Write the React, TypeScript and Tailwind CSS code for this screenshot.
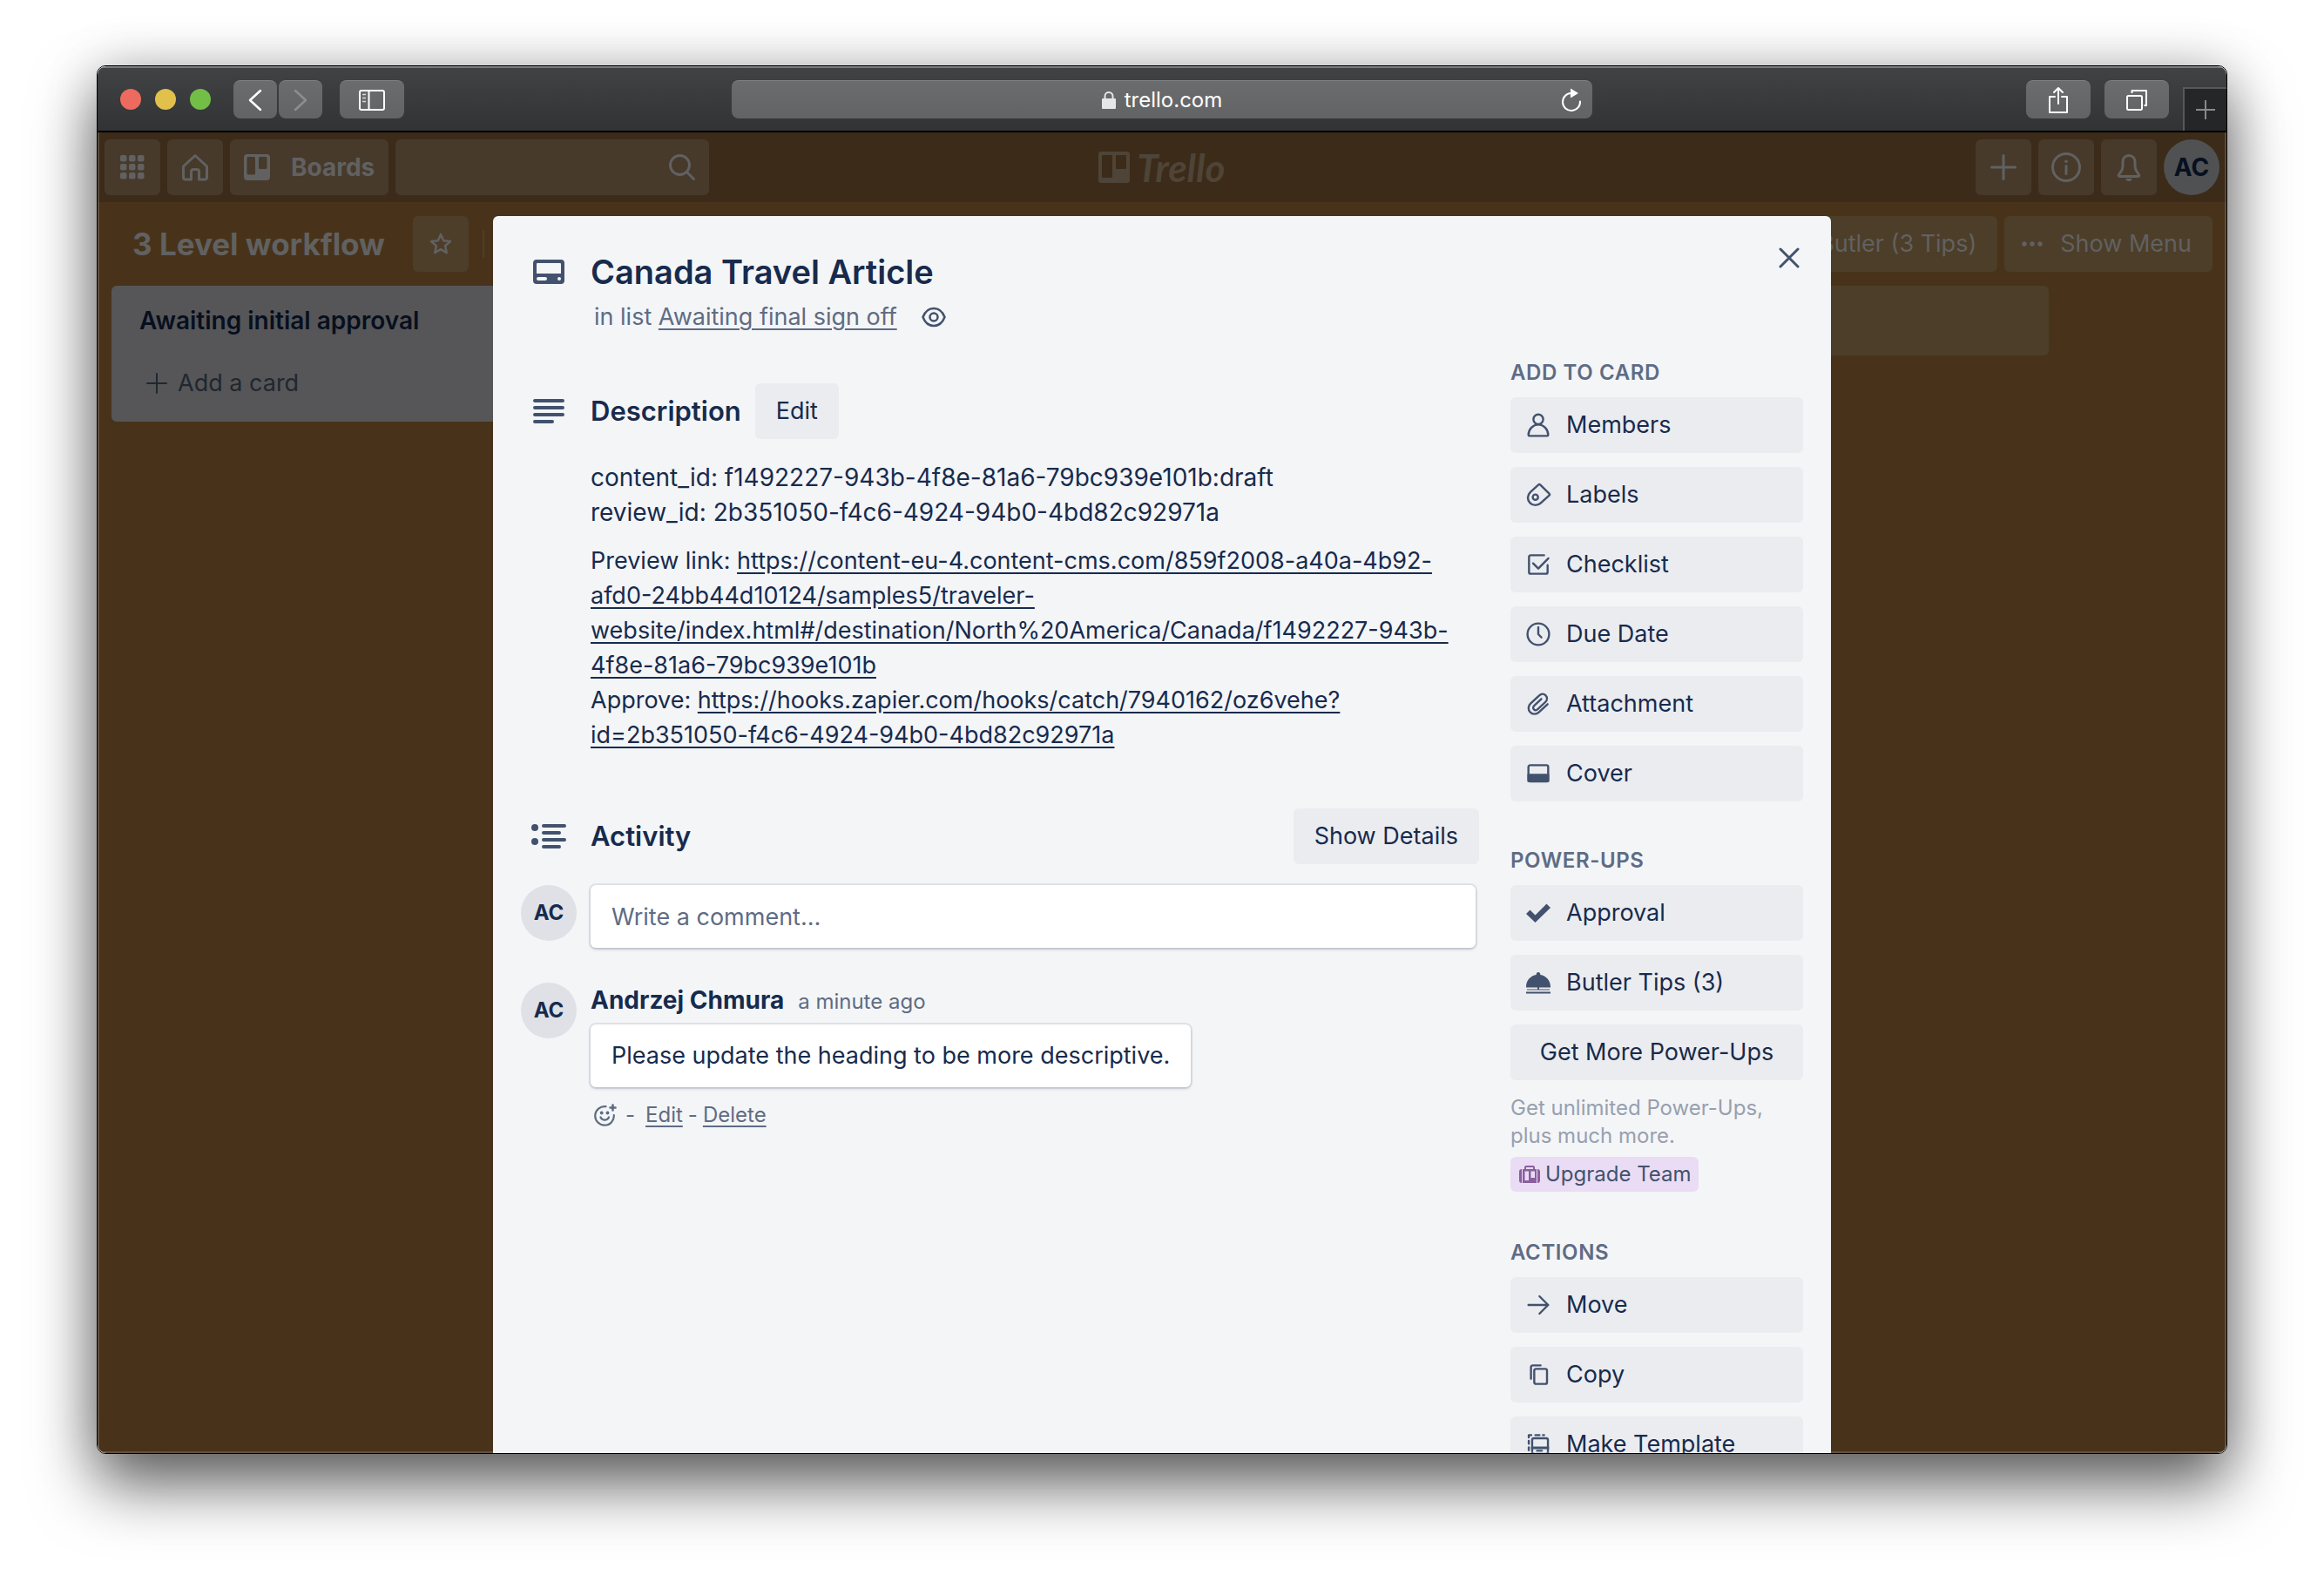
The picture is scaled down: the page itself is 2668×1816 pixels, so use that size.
import React from "react";

type IconProps = { className?: string; children: React.ReactNode; box?: string };

function Icon({ className = "size-8", children, box = "0 0 24 24" }: IconProps) {
  return (
    <svg
      viewBox={box}
      className={"shrink-0 " + className}
      fill="none"
      stroke="currentColor"
      strokeWidth={1.8}
      strokeLinecap="round"
      strokeLinejoin="round"
      aria-hidden="true"
    >
      {children}
    </svg>
  );
}

function TrelloMark({ className }: { className: string }) {
  return (
    <svg viewBox="0 0 36 36" className={"shrink-0 " + className} fill="currentColor" aria-hidden="true">
      <path
        fillRule="evenodd"
        d="M3 0h30a3 3 0 0 1 3 3v30a3 3 0 0 1-3 3H3a3 3 0 0 1-3-3V3a3 3 0 0 1 3-3Zm2 4a1 1 0 0 0-1 1v24a1 1 0 0 0 1 1h10a1 1 0 0 0 1-1V5a1 1 0 0 0-1-1H5Zm16 0a1 1 0 0 0-1 1v14a1 1 0 0 0 1 1h10a1 1 0 0 0 1-1V5a1 1 0 0 0-1-1H21Z"
      />
    </svg>
  );
}

function BoardsMark() {
  return (
    <svg viewBox="0 0 30 30" className="size-[30px] shrink-0" fill="currentColor" aria-hidden="true">
      <path
        fillRule="evenodd"
        d="M4 0h22a4 4 0 0 1 4 4v22a4 4 0 0 1-4 4H4a4 4 0 0 1-4-4V4a4 4 0 0 1 4-4Zm1 3a1.500 1.500 0 0 0-1.500 1.500v17.500a1.500 1.500 0 0 0 1.500 1.500h6.500a1.500 1.500 0 0 0 1.500-1.500V4.500A1.500 1.500 0 0 0 11.500 3H5Zm13.500 0A1.500 1.500 0 0 0 17 4.500v11a1.500 1.500 0 0 0 1.500 1.500H25a1.500 1.500 0 0 0 1.500-1.500v-11A1.500 1.500 0 0 0 25 3h-6.500Z"
      />
    </svg>
  );
}

const chromeButton =
  "flex h-11 items-center justify-center rounded-lg border-t border-[#808183] bg-linear-to-b from-[#6b6c6e] to-[#626365] text-white";

function BrowserBar() {
  return (
    <div className="flex h-[76px] shrink-0 items-center border-t-2 border-b-2 border-t-[#7b7d7e] border-b-black bg-linear-to-b from-[#414244] to-[#323335]">
      <div className="flex flex-1 basis-0 items-center">
        <div className="ml-[26px] flex gap-4">
          <span className="size-6 rounded-full bg-[#ed6a5f]" />
          <span className="size-6 rounded-full bg-[#e1c04c]" />
          <span className="size-6 rounded-full bg-[#72be47]" />
        </div>
        <div className="ml-[26px] flex gap-0.5">
          <button aria-label="Back" className={chromeButton + " w-[50px]"}>
            <svg viewBox="0 0 16 26" className="h-[26px] w-4" fill="none" stroke="currentColor" strokeWidth="2.500" strokeLinecap="round" strokeLinejoin="round"><path d="M14 2 2 13l12 11" /></svg>
          </button>
          <button aria-label="Forward" className={chromeButton + " w-[50px]"}>
            <svg viewBox="0 0 16 26" className="h-[26px] w-4 text-[#8d8e90]" fill="none" stroke="currentColor" strokeWidth="2.500" strokeLinecap="round" strokeLinejoin="round"><path d="m2 2 12 11L2 24" /></svg>
          </button>
        </div>
        <button aria-label="Show sidebar" className={chromeButton + " ml-5 w-[74px]"}>
          <svg viewBox="0 0 32 26" className="h-[26px] w-8" fill="none" stroke="currentColor" strokeWidth="2"><rect x="2" y="2" width="28" height="22" rx="2" /><path d="M12.500 2v22" /><path d="M5 6.500h4M5 10.500h4M5 14.500h4" strokeWidth="1.500" opacity=".75" /></svg>
        </button>
      </div>
      <div className={chromeButton + " relative w-[988px]"}>
        <svg viewBox="0 0 16 20" className="mr-2.5 h-5 w-4" aria-hidden="true"><rect x="0" y="8" width="16" height="12" rx="1" fill="#e6e6e6" /><path d="M3.500 9V5.500a4.500 4.500 0 0 1 9 0V9" fill="none" stroke="#e6e6e6" strokeWidth="2" /></svg>
        <span className="text-2xl leading-8">trello.com</span>
        <button aria-label="Reload" className="absolute right-3 flex">
          <svg viewBox="0 0 24 28" className="h-7 w-6" fill="none" stroke="currentColor" strokeWidth="2" strokeLinecap="round" aria-hidden="true"><path d="M11.500 6A10 10 0 1 0 22 15.500" /><path d="M11 .5 20 6l-9 5.500Z" fill="currentColor" stroke="none" /></svg>
        </button>
      </div>
      <div className="flex flex-1 basis-0 items-center justify-end gap-4 self-stretch">
        <button aria-label="Share" className={chromeButton + " w-[74px]"}>
          <svg viewBox="0 0 24 32" className="h-8 w-6" fill="none" stroke="currentColor" strokeWidth="2" strokeLinecap="round" strokeLinejoin="round"><path d="M8 12H2v18h20V12h-6" /><path d="M12 20V2M7 7l5-5 5 5" /></svg>
        </button>
        <button aria-label="Show all tabs" className={chromeButton + " w-[74px]"}>
          <svg viewBox="0 0 26 26" className="size-[26px]" fill="none" stroke="currentColor" strokeWidth="2" strokeLinejoin="round"><rect x="2" y="8" width="17" height="16" rx="1.500" /><path d="M7.500 5V2H24v17h-2.500" /></svg>
        </button>
        <button aria-label="New tab" className="flex h-[50px] w-[50px] items-center justify-center self-end border-t-2 border-l-2 border-[#57585a] bg-[#252627] text-[#8a8a8a]">
          <svg viewBox="0 0 24 24" className="size-6" fill="none" stroke="currentColor" strokeWidth="2"><path d="M12 1v22M1 12h22" /></svg>
        </button>
      </div>
    </div>
  );
}

const navButton = "flex size-16 shrink-0 items-center justify-center rounded-md bg-[#473a2b]";

function AppHeader() {
  return (
    <header className="flex h-20 items-center bg-[#3c2b18] px-2 text-[#616161]">
      <div className="flex flex-1 gap-2">
        <button aria-label="Apps" className={navButton}>
          <svg viewBox="0 0 28 28" className="size-7" fill="currentColor" aria-hidden="true">
            {[0, 10, 20].map((y) => [0, 10, 20].map((x) => <rect key={`${x}-${y}`} x={x} y={y} width="7.500" height="7.500" rx="2" />))}
          </svg>
        </button>
        <button aria-label="Home" className={navButton}>
          <svg viewBox="0 0 32 32" className="size-8" fill="none" stroke="currentColor" strokeWidth="3" strokeLinejoin="round" aria-hidden="true"><path d="M16 2.500 2.500 15v12.500A2.500 2.500 0 0 0 5 30h6.500v-9a2.500 2.500 0 0 1 2.500-2.500h4a2.500 2.500 0 0 1 2.500 2.500v9H27a2.500 2.500 0 0 0 2.500-2.500V15L16 2.500Z" /></svg>
        </button>
        <button className="flex h-16 shrink-0 items-center gap-6 rounded-md bg-[#473a2b] px-4 text-[28px] font-bold">
          <BoardsMark />
          Boards
        </button>
        <label className="flex h-16 w-[360px] items-center rounded-md bg-[#473a2b] pr-4">
          <input aria-label="Search" className="h-full min-w-0 flex-1 bg-transparent px-4 outline-none" />
          <svg viewBox="0 0 30 30" className="size-[30px]" fill="none" stroke="currentColor" strokeWidth="3" strokeLinecap="round" aria-hidden="true"><circle cx="12.500" cy="12.500" r="11" /><path d="m20.500 20.500 8 8" /></svg>
        </label>
      </div>
      <a href="#home" className="flex items-center gap-2 text-[#4e4437]">
        <TrelloMark className="size-9" />
        <span className="font-['Lato'] text-[44px] leading-10 font-bold italic">Trello</span>
      </a>
      <div className="flex flex-1 justify-end gap-2">
        <button aria-label="Create" className={navButton}>
          <svg viewBox="0 0 30 30" className="size-[30px]" fill="none" stroke="currentColor" strokeWidth="3" strokeLinecap="round"><path d="M15 1.500v27M1.500 15h27" /></svg>
        </button>
        <button aria-label="Information" className={navButton}>
          <svg viewBox="0 0 34 34" className="size-[34px]" fill="none" stroke="currentColor" strokeWidth="3" strokeLinecap="round"><circle cx="17" cy="17" r="15.500" /><path d="M17 15.500v9" /><path d="M17 10.200v.1" strokeWidth="3.500" /></svg>
        </button>
        <button aria-label="Notifications" className={navButton}>
          <svg viewBox="0 0 28 32" className="h-8 w-7" fill="none" stroke="currentColor" strokeWidth="3" strokeLinejoin="round"><path d="M14 2.500c-4.500 0-7 3.500-7 7.500v5c0 2.500-1 4.500-2.500 6.500L2.500 24.500c-.7 1-.3 2 1 2h21c1.300 0 1.700-1 1-2l-2-3C22 19.500 21 17.500 21 15v-5c0-4-2.500-7.500-7-7.500Z" /><path d="M10.500 29h7a3.500 3 0 0 1-7 0Z" fill="currentColor" stroke="none" /></svg>
        </button>
        <button className="size-16 shrink-0 rounded-full bg-[#505153] text-[28px] font-bold text-[#07101f]">AC</button>
      </div>
    </header>
  );
}

function Board() {
  return (
    <main className="text-[#616161]">
      <div className="flex items-center gap-4 px-4 pt-4">
        <h1 className="ml-6 text-[35px] leading-[64px] font-bold">3 Level workflow</h1>
        <button aria-label="Star board" className="ml-4 flex size-16 items-center justify-center rounded-md bg-[#4d3e29]">
          <svg viewBox="0 0 26 26" className="size-[26px]" fill="none" stroke="currentColor" strokeWidth="2.500" strokeLinejoin="round"><path d="m13 2 3.200 7.300 7.800.8-5.900 5.200 1.700 7.900L13 19.200l-6.800 4 1.700-7.900L2 10.100l7.800-.8L13 2Z" /></svg>
        </button>
        <span className="h-8 w-0.5 bg-[#4d3e29]" />
        <div className="ml-auto flex gap-2 text-[27px]">
          <button className="h-16 rounded-md bg-[#4d3e29] px-6">Butler (3 Tips)</button>
          <button className="flex h-16 items-center gap-5 rounded-md bg-[#4d3e29] px-5 pr-6">
            <svg viewBox="0 0 24 8" className="h-2 w-6" fill="currentColor" aria-hidden="true"><circle cx="3" cy="4" r="2.700" /><circle cx="12" cy="4" r="2.700" /><circle cx="21" cy="4" r="2.700" /></svg>
            Show Menu
          </button>
        </div>
      </div>
      <div className="flex items-start gap-4 pt-4 pr-[204px] pl-4">
        <section className="w-[544px] shrink-0 rounded-md bg-[#565658] px-4 pt-4 pb-3">
          <h2 className="px-4 text-[28px] leading-[48px] font-semibold text-[#070f1e]">Awaiting initial approval</h2>
          <button className="mt-4 flex h-16 items-center gap-3 px-6 text-[27px] text-[#20272f]">
            <svg viewBox="0 0 24 24" className="size-6" fill="none" stroke="currentColor" strokeWidth="2" strokeLinecap="round"><path d="M12 1v22M1 12h22" /></svg>
            Add a card
          </button>
        </section>
        <div className="h-20 flex-1 rounded-md bg-[#4d3e29]" />
      </div>
    </main>
  );
}

function Avatar() {
  return (
    <span className="flex size-16 shrink-0 items-center justify-center rounded-full bg-[#dfe1e6] text-2xl font-bold text-[#172b4d]">
      AC
    </span>
  );
}

const grayButton = "h-16 rounded-md bg-[#ebecf0] px-6 text-[27px] text-[#172b4d]";
const surface = "rounded-md bg-white text-[27px] leading-10 shadow-[0_2px_4px_-1px_rgba(9,30,66,.25),0_0_0_2px_rgba(9,30,66,.08)]";

function CardBody() {
  return (
    <div className="w-[1100px] shrink-0">
      <section className="flex gap-4 pt-12">
        <div className="flex w-16 shrink-0 justify-center pt-0.5 text-[#42526e]">
          <svg viewBox="0 0 36 28" className="h-7 w-9 self-start" fill="currentColor" aria-hidden="true">
            <path fillRule="evenodd" d="M4 0h28a4 4 0 0 1 4 4v20a4 4 0 0 1-4 4H4a4 4 0 0 1-4-4V4a4 4 0 0 1 4-4Zm1 4a1 1 0 0 0-1 1v11h28V5a1 1 0 0 0-1-1H5Zm1 16a2 2 0 0 0 0 4h8a2 2 0 0 0 0-4H6Zm24 0a2 2 0 1 0 0 4 2 2 0 0 0 0-4Z" />
          </svg>
        </div>
        <div>
          <h2 className="text-[38px] leading-8 font-semibold">Canada Travel Article</h2>
          <p className="flex items-center pt-4 pl-1 text-[27px] leading-10 text-[#5e6c84]">
            in list&nbsp;
            <a href="#list" className="underline underline-offset-4">Awaiting final sign off</a>
            <svg viewBox="0 0 28 24" className="ml-7 h-6 w-7 text-[#42526e]" fill="none" stroke="currentColor" strokeWidth="2.500" aria-hidden="true"><path d="M1.500 12C4 5.500 8.500 2 14 2s10 3.500 12.500 10C24 18.500 19.500 22 14 22S4 18.500 1.500 12Z" /><circle cx="14" cy="12" r="4.500" /></svg>
          </p>
        </div>
      </section>

      <section className="flex gap-4 pt-14">
        <div className="flex h-16 w-16 shrink-0 items-center justify-center text-[#42526e]">
          <Icon className="h-7 w-9" box="0 0 36 28"><path strokeWidth="4" d="M2 2h32M2 10h32M2 18h32M2 26h20" /></Icon>
        </div>
        <div className="min-w-0 flex-1">
          <div className="flex items-center gap-4">
            <h3 className="text-[31px] leading-10 font-semibold">Description</h3>
            <button className={grayButton}>Edit</button>
          </div>
          <div className="flex flex-col gap-4 pt-6 leading-10">
            <p className="text-[28px] leading-10">
              content_id: f1492227-943b-4f8e-81a6-79bc939e101b:draft
              <br />
              review_id: 2b351050-f4c6-4924-94b0-4bd82c92971a
            </p>
            <p className="text-[27px] leading-10">
              Preview link:{" "}
              <a href="#preview" className="underline underline-offset-4">
                https://content-eu-4.content-cms.com/859f2008-a40a-4b92-afd0-24bb44d10124/samples5/traveler-website/index.html#/destination/North%20America/Canada/f1492227-943b-4f8e-81a6-79bc939e101b
              </a>
              <br />
              Approve:{" "}
              <a href="#approve" className="underline underline-offset-4">
                https://hooks.zapier.com/hooks/catch/7940162/oz6vehe?id=2b351050-f4c6-4924-94b0-4bd82c92971a
              </a>
            </p>
          </div>
        </div>
      </section>

      <section className="pt-16">
        <div className="flex items-center gap-4">
          <div className="flex w-16 shrink-0 justify-center text-[#42526e]">
            <Icon className="h-7 w-10" box="0 0 40 28"><path strokeWidth="4" d="M14 2h24M14 10h18M14 18h24M14 26h18" /><circle cx="4" cy="4" r="4" fill="currentColor" stroke="none" /><circle cx="4" cy="20" r="4" fill="currentColor" stroke="none" /></Icon>
          </div>
          <h3 className="flex-1 text-[31px] leading-10 font-semibold">Activity</h3>
          <button className={grayButton}>Show Details</button>
        </div>
        <div className="flex gap-4 pt-6 pr-1">
          <Avatar />
          <input aria-label="Write a comment" placeholder="Write a comment…" className={surface + " h-[72px] min-w-0 flex-1 px-6 placeholder:text-[#5e6c84]"} />
        </div>
        <div className="flex gap-4 pt-10">
          <Avatar />
          <div>
            <p className="flex items-baseline gap-4 leading-10">
              <span className="text-[28px] font-bold">Andrzej Chmura</span>
              <a href="#comment" className="text-2xl text-[#5e6c84]">a minute ago</a>
            </p>
            <p className={surface + " mt-2 w-fit px-6 py-4"}>Please update the heading to be more descriptive.</p>
            <div className="flex h-16 items-center pl-1 text-2xl text-[#5e6c84]">
              <button aria-label="Add reaction">
                <svg viewBox="0 0 26 26" className="size-[26px]" fill="none" stroke="currentColor" strokeWidth="2.200" strokeLinecap="round"><path d="M13.500 3.200A10.800 10.800 0 1 0 22.800 13" /><path d="M7.500 15.500c2 4.200 7.500 4.200 9.500 0" /><path d="M21.500 1.500v6M18.500 4.500h6" strokeWidth="2.600" /><circle cx="8.700" cy="10.500" r="1.900" fill="currentColor" stroke="none" /><circle cx="15.500" cy="10.500" r="1.900" fill="currentColor" stroke="none" /></svg>
              </button>
              <span className="mr-3 ml-2.5">-</span>
              <a href="#edit" className="underline underline-offset-4">Edit</a>
              <span className="mx-1.5">-</span>
              <a href="#delete" className="underline underline-offset-4">Delete</a>
            </div>
          </div>
        </div>
      </section>
    </div>
  );
}

function SideButton({ label, children }: { label: string; children: React.ReactNode }) {
  return (
    <button className="flex h-16 w-full items-center gap-4 rounded-md bg-[#ebecf0] px-4 text-[27px] whitespace-nowrap text-[#172b4d]">
      <span className="flex size-8 shrink-0 items-center justify-center text-[#42526e]">{children}</span>
      {label}
    </button>
  );
}

function SideTitle({ children }: { children: React.ReactNode }) {
  return <h3 className="-mb-2 text-2xl leading-10 font-semibold tracking-wide text-[#5e6c84] uppercase">{children}</h3>;
}

function Sidebar() {
  return (
    <aside className="flex min-w-0 flex-1 flex-col gap-12">
      <section className="flex flex-col gap-4">
        <SideTitle>Add to card</SideTitle>
        <SideButton label="Members">
          <Icon><circle cx="12" cy="7" r="4.200" /><path d="M3.500 20.500c0-5 4-9 8.500-9s8.500 4 8.500 9c0 .6-.3.800-.8.800H4.300c-.5 0-.8-.2-.8-.8Z" /></Icon>
        </SideButton>
        <SideButton label="Labels">
          <Icon><path d="M12 3.500 5.200 9.600c-2.900 2.800-2.900 6.800-.3 9.400 2.600 2.600 6.700 2.600 9.500-.2l7-6.300c.5-.5.500-1 0-1.500L13.800 3.500c-.6-.6-1.200-.6-1.800 0Z" /><circle cx="9.500" cy="14" r="2.300" /></Icon>
        </SideButton>
        <SideButton label="Checklist">
          <Icon><path d="M17 4H5.500A1.500 1.500 0 0 0 4 5.500v13A1.500 1.500 0 0 0 5.500 20h13a1.500 1.500 0 0 0 1.500-1.500v-6" /><path d="m7.500 11 4.500 4.500 8.700-8.800" /></Icon>
        </SideButton>
        <SideButton label="Due Date">
          <Icon><circle cx="12" cy="12" r="9.300" /><path d="M12 6v6l2.700 2.800" /></Icon>
        </SideButton>
        <SideButton label="Attachment">
          <Icon><path d="m20 12.200-7.300 6.800c-2.500 2.300-5.800 2.200-7.700.1-2-2.100-1.900-5.200.3-7.300l7.300-6.900c1.900-1.700 4.300-1.700 5.800-.1 1.500 1.600 1.400 4-.4 5.700l-6.700 6.200c-1 1-2.200 1-3.100.1-.9-.9-.8-2.200.2-3.200l6.200-5.900" /></Icon>
        </SideButton>
        <SideButton label="Cover">
          <Icon><rect x="3.500" y="4.800" width="17" height="14" rx="1.500" /><path d="M3.500 13h17v5.500h-17Z" fill="currentColor" /></Icon>
        </SideButton>
      </section>
      <section className="flex flex-col gap-4">
        <SideTitle>Power-Ups</SideTitle>
        <SideButton label="Approval">
          <svg viewBox="0 0 28 24" className="h-6 w-7" fill="currentColor" aria-hidden="true"><path d="m4.500 8.500 6 6L23.500 1.500 28 6 10.500 23 0 13Z" /></svg>
        </SideButton>
        <SideButton label="Butler Tips (3)">
          <svg viewBox="0 0 28 26" className="h-[26px] w-7" fill="currentColor" aria-hidden="true"><path d="M0 18C0 10.500 5 5 11.800 4a2.300 2.300 0 1 1 4.400 0C23 5 28 10.500 28 18v.500H0Z" /><path d="M1 20.500h26v1H1ZM0 23.500h28v2H0ZM13 18h2v3h-2Z" /></svg>
        </SideButton>
        <button className="h-16 w-full rounded-md bg-[#ebecf0] text-[27px] whitespace-nowrap text-[#172b4d]">Get More Power-Ups</button>
        <div className="pb-0.5">
          <p className="text-2xl leading-8 text-[#97a0af]">Get unlimited Power-Ups, plus much more.</p>
          <a href="#upgrade" className="mt-2 flex h-10 w-fit items-center gap-1.5 rounded-md bg-[#eadcf4] pr-2 pl-2.5 text-2xl whitespace-nowrap text-[#42526e]">
            <svg viewBox="0 0 24 20" className="h-5 w-6" fill="#89609e" aria-hidden="true"><path fillRule="evenodd" d="M6 4V2a2 2 0 0 1 2-2h8a2 2 0 0 1 2 2v2h2v16H4V4h2Zm2 0h8V2H8v2ZM6.500 6.500V17H11V6.500H6.500Zm7 0V14H18V6.500h-4.500Z" /><path d="M3 4v16a3 3 0 0 1-3-3V7a3 3 0 0 1 3-3ZM21 4v16a3 3 0 0 0 3-3V7a3 3 0 0 0-3-3Z" /></svg>
            Upgrade Team
          </a>
        </div>
      </section>
      <section className="flex flex-col gap-4">
        <SideTitle>Actions</SideTitle>
        <SideButton label="Move">
          <Icon><path d="M3.500 12h17M13 4.500l7.500 7.500-7.500 7.500" /></Icon>
        </SideButton>
        <SideButton label="Copy">
          <Icon><rect x="8.500" y="7" width="11" height="13" rx="1.500" /><path d="M14 4H7.200A1.500 1.500 0 0 0 5.700 5.500v10" /></Icon>
        </SideButton>
        <SideButton label="Make Template">
          <Icon><path d="M8.200 6.800h10.600a1.500 1.500 0 0 1 1.500 1.500v10.400a1.500 1.500 0 0 1-1.500 1.500H8.200a1.500 1.500 0 0 1-1.500-1.500V8.300a1.500 1.500 0 0 1 1.500-1.500Z" /><path d="M6.700 15h13.600" strokeWidth="2.200" /><path d="M11 17.500h4" /><path d="M3.800 6V4H6M9.500 4h3.500M16 4h1M3.800 9v2.500M3.800 14.500v2.500" /></Icon>
        </SideButton>
      </section>
    </aside>
  );
}

function CardDialog() {
  return (
    <div role="dialog" aria-label="Canada Travel Article" className="relative flex h-[1800px] w-[1536px] max-w-full items-start rounded-t-md bg-[#f4f5f7] pr-8 pl-8 text-[#172b4d]">
      <CardBody />
      <div className="flex min-w-0 flex-1 pt-40 pl-9">
        <Sidebar />
      </div>
      <button aria-label="Close" className="absolute top-9 right-9 text-[#42526e]">
        <svg viewBox="0 0 24 24" className="size-6" fill="none" stroke="currentColor" strokeWidth="3" strokeLinecap="round"><path d="m2 2 20 20M22 2 2 22" /></svg>
      </button>
    </div>
  );
}

export default function App() {
  return (
    <div className="flex h-screen overflow-hidden bg-white px-[111px] pt-[75px] pb-[147px] font-['Inter',sans-serif]">
      <div className="flex min-w-0 flex-1 rounded-[10px] border border-black shadow-[0_36px_72px_rgba(0,0,0,.6),0_0_60px_rgba(0,0,0,.18)]">
        <div className="flex min-w-0 flex-1 flex-col overflow-hidden rounded-[10px]">
          <BrowserBar />
          <div className="relative min-h-0 flex-1 overflow-hidden bg-[#48331a]">
            <AppHeader />
            <Board />
            <div className="absolute inset-0 flex items-start justify-center overflow-hidden pt-24">
              <CardDialog />
            </div>
            <div className="pointer-events-none absolute inset-0 border-x-2 border-b-2 border-white/15" />
          </div>
        </div>
      </div>
    </div>
  );
}
